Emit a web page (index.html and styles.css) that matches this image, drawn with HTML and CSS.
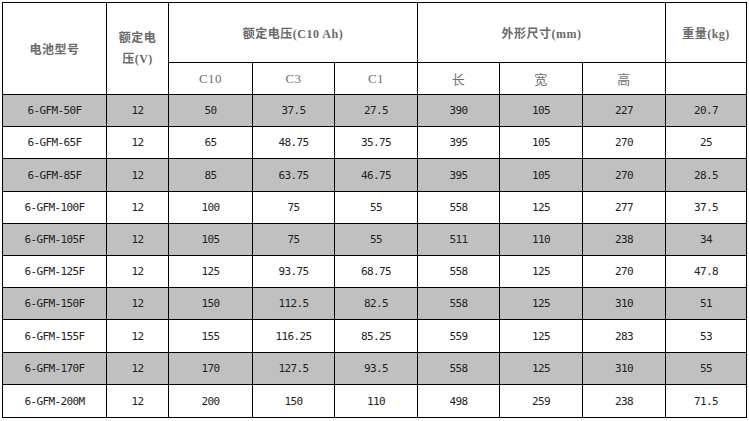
FILE: index.html
```html
<!DOCTYPE html>
<html lang="zh">
<head>
<meta charset="utf-8">
<link rel="stylesheet" href="styles.css">
</head>
<body>
<div class="wrap">
<table class="spec">
  <colgroup>
    <col class="c1"><col class="c2"><col class="c3"><col class="c4"><col class="c5"><col class="c6"><col class="c7"><col class="c8"><col class="c9">
  </colgroup>
  <thead>
    <tr class="h1">
      <th rowspan="2">电池型号</th>
      <th rowspan="2" class="two">额定电<br>压(V)</th>
      <th colspan="3">额定电压(C10 Ah)</th>
      <th colspan="3">外形尺寸(mm)</th>
      <th>重量(kg)</th>
    </tr>
    <tr class="h2">
      <th class="sub">C10</th><th class="sub">C3</th><th class="sub">C1</th>
      <th class="sub">长</th><th class="sub">宽</th><th class="sub">高</th>
      <th class="sub"></th>
    </tr>
  </thead>
  <tbody>
    <tr class="g r32"><td>6-GFM-50F</td><td>12</td><td>50</td><td>37.5</td><td>27.5</td><td>390</td><td>105</td><td>227</td><td>20.7</td></tr>
    <tr class="r32"><td>6-GFM-65F</td><td>12</td><td>65</td><td>48.75</td><td>35.75</td><td>395</td><td>105</td><td>270</td><td>25</td></tr>
    <tr class="g r33"><td>6-GFM-85F</td><td>12</td><td>85</td><td>63.75</td><td>46.75</td><td>395</td><td>105</td><td>270</td><td>28.5</td></tr>
    <tr class="r32"><td>6-GFM-100F</td><td>12</td><td>100</td><td>75</td><td>55</td><td>558</td><td>125</td><td>277</td><td>37.5</td></tr>
    <tr class="g r32"><td>6-GFM-105F</td><td>12</td><td>105</td><td>75</td><td>55</td><td>511</td><td>110</td><td>238</td><td>34</td></tr>
    <tr class="r32"><td>6-GFM-125F</td><td>12</td><td>125</td><td>93.75</td><td>68.75</td><td>558</td><td>125</td><td>270</td><td>47.8</td></tr>
    <tr class="g r32"><td>6-GFM-150F</td><td>12</td><td>150</td><td>112.5</td><td>82.5</td><td>558</td><td>125</td><td>310</td><td>51</td></tr>
    <tr class="r33"><td>6-GFM-155F</td><td>12</td><td>155</td><td>116.25</td><td>85.25</td><td>559</td><td>125</td><td>283</td><td>53</td></tr>
    <tr class="g r32"><td>6-GFM-170F</td><td>12</td><td>170</td><td>127.5</td><td>93.5</td><td>558</td><td>125</td><td>310</td><td>55</td></tr>
    <tr class="r33"><td>6-GFM-200M</td><td>12</td><td>200</td><td>150</td><td>110</td><td>498</td><td>259</td><td>238</td><td>71.5</td></tr>
  </tbody>
</table>
</div>
</body>
</html>
```

FILE: styles.css
```css
html, body {
  margin: 0;
  padding: 0;
  background: #ffffff;
}
.wrap {
  padding: 2px 0 0 2px;
}
.spec {
  border-collapse: collapse;
  table-layout: fixed;
  width: 744px;
  border: 1px solid #000;
}
.c1 { width: 104px; }
.c2 { width: 62px; }
.c3 { width: 84px; }
.c4 { width: 82px; }
.c5 { width: 83px; }
.c6 { width: 82px; }
.c7 { width: 83px; }
.c8 { width: 83px; }
.c9 { width: 81px; }
.spec th, .spec td {
  border: 1px solid #000;
  padding: 0;
  text-align: center;
  vertical-align: middle;
  box-sizing: border-box;
}
.spec th {
  font-family: "Liberation Serif", "Noto Sans CJK SC", serif;
  font-size: 12px;
  font-weight: bold;
  color: #6a6a6a;
  letter-spacing: 0.5px;
}
.spec th.two {
  line-height: 21px;
}
.spec th.sub {
  font-weight: normal;
  font-size: 13px;
  color: #707070;
}
.h1 { height: 60px; }
.h2 { height: 32px; }
.r32 { height: 32px; }
.r33 { height: 33px; }
.spec td {
  font-family: "DejaVu Sans Mono", "Liberation Mono", monospace;
  font-size: 11px;
  letter-spacing: -0.6px;
  color: #222;
}
.g td {
  background: #c0c0c0;
}
```
